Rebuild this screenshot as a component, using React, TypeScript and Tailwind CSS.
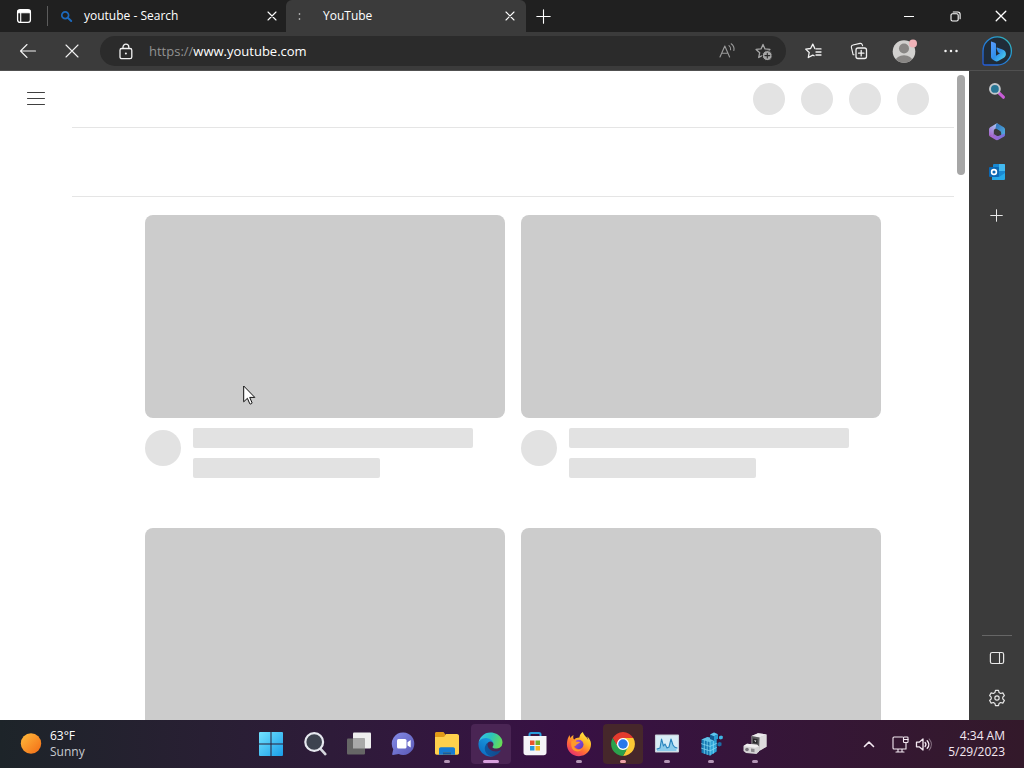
import type { ReactNode } from 'react';

type IconProps = { size?: number; box?: number; className?: string; children: ReactNode };

function Icon({ size = 20, box = 20, className = '', children }: IconProps) {
  return (
    <svg
      width={size}
      height={size}
      viewBox={`0 0 ${box} ${box}`}
      fill="none"
      stroke="currentColor"
      strokeWidth="1.1"
      strokeLinecap="round"
      strokeLinejoin="round"
      className={`shrink-0 ${className}`}
      aria-hidden="true"
    >
      {children}
    </svg>
  );
}

function CloseGlyph({ size = 10 }: { size?: number }) {
  return (
    <Icon size={size} box={10} className="text-white">
      <path d="M1 1l8 8M9 1L1 9" />
    </Icon>
  );
}

function TabStrip() {
  return (
    <header className="flex h-8 shrink-0 items-stretch bg-[#202020] text-white">
      <button aria-label="Tab actions" className="flex w-[47px] items-center justify-center">
        <Icon size={16} box={16}>
          <rect x="1.6" y="1.6" width="12.8" height="12.8" rx="2.4" strokeWidth="1.3" />
          <path d="M2 2.5h12v2.2H2z" fill="currentColor" />
          <path d="M4.7 4v10" />
        </Icon>
      </button>
      <div className="my-1.5 w-px bg-[#5c5c5c]" />
      <div className="flex w-[238px] items-center pl-3">
        <Icon size={13} box={13} className="text-[#1c69bd]">
          <circle cx="5.2" cy="5.2" r="3.4" strokeWidth="1.7" />
          <path d="M7.8 7.8l3.4 3.2" strokeWidth="2" />
        </Icon>
        <a href="#search" className="ml-[11px] flex-1 text-[12px] leading-4">youtube - Search</a>
        <button aria-label="Close youtube - Search" className="flex size-7 items-center justify-center">
          <CloseGlyph />
        </button>
      </div>
      <div className="flex w-60 items-center rounded-t-md bg-[#3b3b3b] pl-2.5">
        <Icon size={7} box={7} className="text-[#b0b0b0]">
          <path d="M3.5 .9v.2M3.5 5.9v.2" strokeWidth="1.7" />
        </Icon>
        <a href="#youtube" className="ml-5 flex-1 text-[12px] leading-4">YouTube</a>
        <button aria-label="Close YouTube" className="mr-0.5 flex size-7 items-center justify-center">
          <CloseGlyph />
        </button>
      </div>
      <button aria-label="New tab" className="flex w-[34px] items-center justify-center">
        <Icon size={15} box={15}><path d="M7.5 .8v13.4M.8 7.5h13.4" /></Icon>
      </button>
      <div className="ml-auto flex">
        <button aria-label="Minimize" className="flex w-[46px] items-center justify-center">
          <Icon size={10} box={10}><path d="M0 5.5h10" /></Icon>
        </button>
        <button aria-label="Restore" className="flex w-[46px] items-center justify-center">
          <Icon size={11} box={11}>
            <rect x="1" y="2.8" width="7.2" height="7.2" rx="1.5" />
            <path d="M3.2 1h4.6a2.3 2.3 0 0 1 2.3 2.3v4.5" />
          </Icon>
        </button>
        <button aria-label="Close window" className="flex w-[46px] items-center justify-center">
          <CloseGlyph size={12} />
        </button>
      </div>
    </header>
  );
}

const STAR = 'M9 2.4l2 4.5 4.9.5-3.6 3.3 1 4.8L9 13.1l-4.3 2.4 1-4.8L2.1 7.4 7 6.9z';

function BingBadge() {
  return (
    <Icon size={32} box={32}>
      <defs>
        <linearGradient id="bing-ring" x1="0" y1="1" x2="1" y2="0">
          <stop offset="0" stopColor="#2457d6" />
          <stop offset=".6" stopColor="#2490d8" />
          <stop offset="1" stopColor="#36bfb0" />
        </linearGradient>
        <linearGradient id="bing-b" x1="0" y1="0" x2="1" y2="1">
          <stop offset="0" stopColor="#5b9cff" />
          <stop offset=".5" stopColor="#2f8fe9" />
          <stop offset="1" stopColor="#52dcec" />
        </linearGradient>
      </defs>
      <path
        d="M16.3 1.8a14 14 0 1 1 0 28.2H3.8c-1.2 0-1.8-.7-1.8-1.8V16A14.2 14.2 0 0 1 16.3 1.800z"
        fill="#202c38"
        stroke="url(#bing-ring)"
        strokeWidth="1.3"
      />
      <path
        d="M10.200 6.400l3.500 1.300c.9.3 1.300.9 1.300 1.800v11.300l4-2.500-2-1-1.400-3.700c-.3-.8.2-1.200 1-.9l4.900 1.900c2.300.9 3.400 2.400 3.400 4.400 0 1.700-.8 3-2.400 3.900l-4.900 2.900c-1.600.9-3.100.8-4.500-.2l-1.400-1c-1.100-.8-1.700-1.700-1.700-2.900V6.800c0-.3.1-.5.200-.4z"
        fill="url(#bing-b)"
        stroke="none"
      />
    </Icon>
  );
}

function Toolbar() {
  return (
    <div className="flex h-[39px] shrink-0 items-center border-b border-[#505050] bg-[#3b3b3b] px-1 text-[#f2f2f2]">
      <button aria-label="Back" className="ml-0.5 flex w-11 justify-center">
        <Icon size={18} box={18}><path d="M8 2.5L1.5 9 8 15.5M1.5 9h15" /></Icon>
      </button>
      <button aria-label="Stop loading" className="flex w-11 justify-center">
        <Icon size={14} box={14}><path d="M1 1l12 12M13 1L1 13" /></Icon>
      </button>
      <form className="mr-1 ml-1.5 flex h-[30px] min-w-0 flex-1 items-center rounded-full bg-[#2b2b2b]">
        <button type="button" aria-label="Site information" className="mr-3.5 ml-[18px] flex">
          <Icon size={17} box={17}>
            <rect x="2" y="5.5" width="11.800" height="10.200" rx="1.800" strokeWidth="1.300" />
            <path d="M5 5.300V4a2.900 2.900 0 0 1 5.800 0v1.300" strokeWidth="1.300" />
            <circle cx="7.900" cy="10.500" r="1" fill="currentColor" stroke="none" />
          </Icon>
        </button>
        <label htmlFor="address" className="text-[13px] leading-5 text-[#929292]">https://</label>
        <input
          id="address"
          defaultValue="www.youtube.com"
          className="min-w-0 flex-1 bg-transparent text-[13px] leading-5 text-white outline-none"
        />
        <button type="button" aria-label="Read aloud" className="flex w-9 justify-center text-[#9b9b9b]">
          <Icon size={18} box={18}>
            <path d="M2 15L6.800 4l4.800 11M3.600 11.300H10" />
            <path d="M11 3.600c1.400 1.100 1.900 2.500 1.600 4.200M13.200 1.800c2.400 1.700 3.200 4 2.700 6.700" />
          </Icon>
        </button>
        <button type="button" aria-label="Add to favorites" className="mr-[5px] flex w-9 justify-center text-[#a5a5a5]">
          <Icon size={19} box={19}>
            <path d={STAR} strokeWidth="1.300" />
            <circle cx="13.300" cy="13.600" r="5" fill="#a5a5a5" stroke="#2b2b2b" strokeWidth="1" />
            <path d="M13.300 11.200V16M10.900 13.600h4.800" stroke="#2b2b2b" />
          </Icon>
        </button>
      </form>
      <button aria-label="Favorites" className="flex w-[46px] justify-center">
        <Icon size={18} box={18}>
          <path d="M12 6.900H17M12 10H17M12 13H17" strokeWidth="1.300" />
          <path d="M10.800 6.600L8.800 2.100 6.600 6.500l-4.900.6 3.500 3.400-.9 5 4.500-2.400 1.300.7" strokeWidth="1.300" />
        </Icon>
      </button>
      <button aria-label="Collections" className="flex w-[46px] justify-center">
        <Icon size={18} box={18}>
          <rect x="6" y="6" width="10.500" height="10.500" rx="2" strokeWidth="1.300" />
          <path d="M4 12.800l-.9-.2-1.700-7.200A2 2 0 0 1 3 3l7.100-1.600a2 2 0 0 1 2.200 1.400l.3 1" />
          <path d="M11.200 8.500v5.400M8.500 11.200h5.400" strokeWidth="1.300" />
        </Icon>
      </button>
      <button aria-label="Profile" className="flex w-[46px] justify-center">
        <Icon size={26} box={26} className="text-transparent">
          <defs><clipPath id="avatar"><circle cx="12" cy="13.500" r="11.300" /></clipPath></defs>
          <g clipPath="url(#avatar)">
            <rect width="26" height="26" fill="#d1d0ce" />
            <circle cx="12" cy="10.500" r="5" fill="#888684" />
            <ellipse cx="12" cy="23" rx="8.500" ry="5.700" fill="#888684" />
          </g>
          <circle cx="21" cy="5.500" r="4" fill="#efb2b7" />
        </Icon>
      </button>
      <button aria-label="Settings and more" className="flex w-[46px] justify-center">
        <Icon size={16} box={16}>
          <path d="M2.500 8h.01M8 8h.01M13.500 8h.01" strokeWidth="2.500" />
        </Icon>
      </button>
      <button aria-label="Bing" className="flex w-[46px] justify-center"><BingBadge /></button>
    </div>
  );
}

function VideoPlaceholder() {
  return (
    <article>
      <div className="h-[203px] rounded-lg bg-[#cccccc]" />
      <div className="mt-2.5 flex h-[100px] items-start gap-3">
        <div className="mt-0.5 size-9 shrink-0 rounded-full bg-[#e2e2e2]" />
        <div className="flex flex-1 flex-col gap-2.5">
          <div className="h-5 w-[280px] rounded-xs bg-[#e2e2e2]" />
          <div className="h-5 w-[187px] rounded-xs bg-[#e2e2e2]" />
        </div>
      </div>
    </article>
  );
}

function Page() {
  return (
    <main className="relative flex min-w-0 flex-1 overflow-hidden bg-white">
      <div className="w-[72px] shrink-0 pt-[19px] pl-[26px]">
        <button aria-label="Guide" className="flex text-[#404040]">
          <Icon size={20} box={20}><path d="M1.500 2.500h17M1.500 8.500h17M1.500 14.500h17" strokeWidth="1" /></Icon>
        </button>
      </div>
      <div className="min-w-0 flex-1">
        <div className="flex h-[57px] items-center justify-end gap-4 border-b border-[#e5e5e5] pr-[25px]">
          <div className="size-8 rounded-full bg-[#e3e3e3]" />
          <div className="size-8 rounded-full bg-[#e3e3e3]" />
          <div className="size-8 rounded-full bg-[#e3e3e3]" />
          <div className="size-8 rounded-full bg-[#e3e3e3]" />
        </div>
        <div className="h-[69px] border-b border-[#e5e5e5]" />
        <section aria-label="Videos" className="mx-auto mt-[18px] grid max-w-[736px] grid-cols-2 gap-x-4">
          <VideoPlaceholder />
          <VideoPlaceholder />
          <VideoPlaceholder />
          <VideoPlaceholder />
        </section>
      </div>
      <div className="w-[15px] shrink-0 pt-1 pl-[3px]">
        <div className="h-[100px] w-2 rounded-full bg-[#a6a6a6]" />
      </div>
      <svg className="absolute top-[314px] left-[243px]" width="14" height="21" viewBox="0 0 14 21" aria-hidden="true">
        <path
          d="M.7 1v15.800l3.700-3.500 2.400 5.500c.3.6 2.500-.3 2.300-.9l-2.400-5.500h5.100z"
          fill="#fff"
          stroke="#111"
          strokeWidth="1"
          strokeLinejoin="round"
        />
      </svg>
    </main>
  );
}

function SideBar() {
  return (
    <aside className="flex w-[55px] shrink-0 flex-col bg-[#3b3b3b] text-[#e8e8e8]">
      <button aria-label="Search" className="flex h-10 items-center justify-center">
        <Icon size={18} box={18}>
          <path d="M11.200 11.200l4.200 4" stroke="#c75cd6" strokeWidth="3.200" />
          <circle cx="6.900" cy="6.900" r="4.900" fill="#287695" stroke="#c4c7cb" strokeWidth="2" />
        </Icon>
      </button>
      <button aria-label="Microsoft 365" className="flex h-10 items-center justify-center pt-0.5">
        <Icon size={18} box={18} className="text-transparent">
          <defs>
            <linearGradient id="m-left" x1=".6" y1="0" x2="0" y2="1">
              <stop offset="0" stopColor="#a5c3f2" /><stop offset="1" stopColor="#a65cc9" />
            </linearGradient>
            <linearGradient id="m-right" x1="0" y1="0" x2="1" y2="1">
              <stop offset="0" stopColor="#2f6fb8" /><stop offset="1" stopColor="#55b5e4" />
            </linearGradient>
            <linearGradient id="m-bottom" x1="0" y1="0" x2="1" y2="0">
              <stop offset="0" stopColor="#b865cf" /><stop offset="1" stopColor="#6f72dc" />
            </linearGradient>
          </defs>
          <path d="M8.500.600L2.200 4.200C1.400 4.700 1 5.400 1 6.300v5.900l4.800 1.300V7.800c0-.9.4-1.500 1.100-1.900l3.500-2V1.200C9.900.500 9.200.300 8.500.600z" fill="url(#m-left)" />
          <path d="M8.500.600l-1 4.600 4.500 2.700c.8.500 1.200 1.100 1.200 2v4.300l3-1.700c.6-.5.8-1.100.8-1.900V6.300c0-.9-.4-1.600-1.200-2.100l-5-3C10 .700 9.200.400 8.500.600z" fill="url(#m-right)" />
          <path d="M1 12.200c.1.600.5 1 1.100 1.400l5 3c1.300.7 2.500.7 3.800 0l4.900-2.900c.8-.5 1.200-1.100 1.200-2l-.3-1.100-5.800 2.200c-.8.400-1.400.4-2.200 0l-2.900-1.700v1.400z" fill="url(#m-bottom)" />
          <path d="M9 6.500l2.500 1.400v2.800L9 12.100l-2.500-1.400V7.900z" fill="#3b3b3b" />
        </Icon>
      </button>
      <button aria-label="Outlook" className="flex h-10 items-center justify-center pt-0.5">
        <Icon size={18} box={18} className="text-transparent">
          <rect x="5" y="1" width="12" height="14" rx="1" fill="#1989d2" />
          <path d="M11 1h5a1 1 0 0 1 1 1v6h-6z" fill="#43baf0" />
          <path d="M4 9l7 5 6-4v6a1 1 0 0 1-1 1H4z" fill="#26a9e8" />
          <rect x="1" y="4" width="10" height="10" rx="1" fill="#0b68b4" />
          <circle cx="6" cy="9" r="2.400" stroke="#fff" strokeWidth="1.600" />
        </Icon>
      </button>
      <button aria-label="Customize" className="flex h-12 items-center justify-center">
        <Icon size={13} box={13}><path d="M6.500 .7v11.600M.7 6.500h11.600" strokeWidth="1" /></Icon>
      </button>
      <div className="mx-auto mt-auto mb-0.5 h-px w-[30px] bg-[#666666]" />
      <button aria-label="Toggle sidebar" className="flex h-10 items-center justify-center">
        <Icon size={16} box={16}>
          <rect x="1.400" y="2.500" width="13.200" height="11" rx="1.800" strokeWidth="1.200" />
          <path d="M10.500 2.500v11" />
        </Icon>
      </button>
      <button aria-label="Settings" className="mb-0.5 flex h-10 items-center justify-center">
        <Icon size={18} box={20}>
          <path d="M8.300 1.500h3.400l.6 2.500 1.700 1 2.500-.7 1.700 2.900-1.800 1.800v2l1.800 1.800-1.700 2.900-2.500-.7-1.700 1-.6 2.500H8.300L7.700 16 6 15l-2.500.7-1.700-2.900L3.600 11V9L1.800 7.200l1.700-2.900L6 5l1.700-1z" strokeWidth="1.300" />
          <circle cx="10" cy="10" r="2.400" strokeWidth="1.300" />
        </Icon>
      </button>
    </aside>
  );
}

function StartIcon() {
  return (
    <Icon size={26} box={26} className="text-transparent">
      <defs>
        <linearGradient id="win" x1="0" y1="0" x2="1" y2="1">
          <stop offset="0" stopColor="#73e3ff" /><stop offset="1" stopColor="#199de8" />
        </linearGradient>
      </defs>
      <path d="M2 1h10.500v11.500H1V2a1 1 0 0 1 1-1zM13.500 1H24a1 1 0 0 1 1 1v10.500H13.500zM1 13.500h11.500V25H2a1 1 0 0 1-1-1zM13.500 13.500H25V24a1 1 0 0 1-1 1H13.500z" fill="url(#win)" />
    </Icon>
  );
}

function SearchIcon() {
  return (
    <Icon size={26} box={26}>
      <path d="M18.500 17.800l4.800 5.300" stroke="#d5d7de" strokeWidth="2.600" />
      <circle cx="12.200" cy="11" r="8.900" fill="#3d434f" stroke="#e6e8ef" strokeWidth="2.200" />
    </Icon>
  );
}

function TaskViewIcon() {
  return (
    <Icon size={26} box={26} className="text-transparent">
      <rect x="7" y="1.500" width="18" height="16" rx="1" fill="#eeeeee" />
      <rect x="1" y="7.500" width="18" height="16" rx="1" fill="#666666" />
      <path d="M7 7.500h12v10H7z" fill="#a9a9a9" />
    </Icon>
  );
}

function ChatIcon() {
  return (
    <Icon size={26} box={26} className="text-transparent">
      <defs>
        <linearGradient id="chat" x1="0" y1="0" x2="1" y2="1">
          <stop offset="0" stopColor="#858be6" /><stop offset="1" stopColor="#5a59b7" />
        </linearGradient>
      </defs>
      <path d="M13.500 1.500a11.200 11.200 0 1 1-4.800 21.500L3 23.900c-.6.100-1-.4-.8-1l1.100-4.700A11.200 11.200 0 0 1 13.500 1.500z" fill="url(#chat)" />
      <rect x="7" y="8" width="9.500" height="9.500" rx="1.500" fill="#fff" />
      <path d="M17.500 11.200L20.700 9v7.600l-3.200-2.200z" fill="#fff" />
    </Icon>
  );
}

function FolderIcon() {
  return (
    <Icon size={26} box={26} className="text-transparent">
      <path d="M1 2.500C1 1.700 1.600 1 2.500 1h7l2.300 3H23c1 0 2 .8 2 2v3H1z" fill="#e29a17" />
      <path d="M10.500 5.500L12 3h11c1 0 2 .7 2 2v17c0 1-.7 1.700-1.700 1.700H2.700c-1 0-1.700-.7-1.700-1.700V6h8.300z" fill="#ffd04c" />
      <path d="M5 23.700V18c0-1 .8-1.800 1.800-1.800h12.400c1 0 1.800.8 1.800 1.800v5.700h-4v-2.500H9v2.500z" fill="#167bd3" />
      <path d="M9 21.200h8v2.500H9z" fill="#0f5ca6" />
    </Icon>
  );
}

function EdgeIcon() {
  return (
    <Icon size={25} box={266} className="text-transparent">
      <defs>
        <linearGradient id="edge-a" x1="0" y1="0" x2="1" y2="0">
          <stop offset="0" stopColor="#0c59a4" /><stop offset="1" stopColor="#114a8b" />
        </linearGradient>
        <linearGradient id="edge-b" x1=".8" y1="0" x2=".3" y2="1">
          <stop offset="0" stopColor="#1b9de2" /><stop offset="1" stopColor="#0b6bc0" />
        </linearGradient>
        <linearGradient id="edge-c" x1="0" y1=".2" x2="1" y2=".5">
          <stop offset="0" stopColor="#35c1f1" /><stop offset=".5" stopColor="#2cc4b9" /><stop offset="1" stopColor="#66dc57" />
        </linearGradient>
      </defs>
      <path d="M235.700 195.500a94 94 0 0 1-10.500 4.700 102 102 0 0 1-36 6.400c-47.300 0-88.500-32.500-88.500-74.300A31.500 31.500 0 0 1 117.100 105c-42.800 1.800-53.800 46.400-53.800 72.500 0 73.900 68.100 81.400 82.800 81.400 7.900 0 19.800-2.300 27-4.600l1.300-.4a128.300 128.300 0 0 0 66.600-52.800 4 4 0 0 0-5.300-5.600z" fill="url(#edge-a)" />
      <path d="M110.300 246.300A79.200 79.200 0 0 1 87.600 225a80.700 80.700 0 0 1 29.500-120c3.100-1.500 8.500-4.100 15.500-4a32.400 32.400 0 0 1 25.700 13 31.900 31.900 0 0 1 6.400 18.700c0-.2 24.500-79.600-80-79.600-43.900 0-80 41.700-80 78.200a130 130 0 0 0 12.100 56 128 128 0 0 0 156.400 67.100 75.600 75.600 0 0 1-62.800-8z" fill="url(#edge-b)" />
      <path d="M156.900 153.800c-.8 1-3.300 2.500-3.300 5.700 0 2.600 1.700 5.100 4.700 7.200 14.400 10 41.500 8.700 41.600 8.700a59.600 59.600 0 0 0 30.300-8.400 61.400 61.400 0 0 0 30.400-52.900c.3-22.400-8-37.300-11.300-43.900C228.100 28.800 182.400 4.900 132.600 4.900A128 128 0 0 0 4.600 131c.5-36.500 36.800-66 80-66 3.500 0 23.500.3 42 10 16.300 8.600 24.900 19 30.900 29.300 6.200 10.700 7.300 24.100 7.300 29.500s-2.800 13.300-7.900 20z" fill="url(#edge-c)" />
    </Icon>
  );
}

function StoreIcon() {
  return (
    <Icon size={26} box={26} className="text-transparent">
      <path d="M7.500 6V3.500C7.500 2.600 8 2 9 2h8c1 0 1.500.6 1.500 1.500V6" stroke="#289cdb" strokeWidth="2" />
      <path d="M1.500 5h23v16.500c0 1.700-1.200 2.800-2.800 2.800H4.300c-1.600 0-2.800-1.100-2.800-2.800z" fill="#f5f4f8" />
      <path d="M8 9.500h4.500V14H8z" fill="#e9532b" />
      <path d="M13.500 9.500H18V14h-4.500z" fill="#74ae2a" />
      <path d="M8 15h4.500v4.500H8z" fill="#2798d9" />
      <path d="M13.500 15H18v4.500h-4.500z" fill="#f4b51b" />
    </Icon>
  );
}

function FirefoxIcon() {
  return (
    <Icon size={26} box={26} className="text-transparent">
      <defs>
        <linearGradient id="fox" x1=".85" y1="0" x2=".2" y2="1">
          <stop offset="0" stopColor="#fff04a" /><stop offset=".35" stopColor="#ffb928" /><stop offset=".65" stopColor="#ff6b36" /><stop offset="1" stopColor="#e32878" />
        </linearGradient>
        <linearGradient id="globe" x1="0" y1="0" x2="1" y2="1">
          <stop offset="0" stopColor="#a954e7" /><stop offset="1" stopColor="#5438b5" />
        </linearGradient>
      </defs>
      <path d="M23.600 8.500c-.6-1.300-1.600-2.500-2.500-3 .7 1.300 1 2.500 1.100 3.400-1.300-3.100-4.500-4.300-5.300-7.900-2.600 1.500-3.500 4.300-3.500 5.600-2.200.1-3.800.8-5.100 1.800l-.7-.4c-.5-1.500-.4-2.900-.1-4C5.800 4.800 4.900 6 4.300 7c-.5-.7-.5-2.400-.4-3C1.900 5.800.9 10 .9 13.300.9 20 6.200 25.200 13 25.200c6.900 0 12-5.300 12-12.100 0-1.700-.6-3.400-1.400-4.600z" fill="url(#fox)" />
      <circle cx="12.800" cy="13.500" r="4.700" fill="url(#globe)" />
      <path d="M5.200 10.500c2-1.300 4-.9 5.300.2 1.300-.1 2.800.1 3.500.4-.2 1.400-2.800 1.900-3.600 2.700-.5 1.300-1.600 1.400-2.600 1.500 1.100 3.400 5.200 4.500 8.200 2.400-2.100 4.700-10.800 3.300-10.800-4.200z" fill="#ff9a2b" />
    </Icon>
  );
}

function ChromeIcon() {
  return (
    <Icon size={26} box={48} className="text-transparent">
      <circle cx="24" cy="24" r="14" fill="#fff" />
      <path d="M4.950 13A22 22 0 0 1 43.050 13H24a11 11 0 0 0-9.530 16.500z" fill="#e33b2e" />
      <path d="M43.050 13A22 22 0 0 1 24 46l9.530-16.500A11 11 0 0 0 24 13z" fill="#fcc934" />
      <path d="M24 46A22 22 0 0 1 4.950 13l9.520 16.500a11 11 0 0 0 19.060 0z" fill="#2ba24c" />
      <circle cx="24" cy="24" r="8.800" fill="#2878ea" />
    </Icon>
  );
}

function MonitorIcon() {
  return (
    <Icon size={26} box={26} className="text-transparent">
      <rect x="1.500" y="4" width="23" height="17" rx=".5" fill="#d8edf7" stroke="#c6cdd5" />
      <path d="M3 20v-2l3-1 1.500-9 2 7 1.500-2 2 4 2-1 2-8 2 6 1.500 2 2 1v3z" fill="#8bcbea" />
      <path d="M3 18l3-1 1.500-9 2 7 1.500-2 2 4 2-1 2-8 2 6 1.500 2 2.500 1" stroke="#2884bd" strokeWidth="1.100" />
    </Icon>
  );
}

function RegistryIcon() {
  return (
    <Icon size={26} box={26} className="text-transparent">
      <path d="M3.500 8.500l6-2.500 9 2.500v12L12 24.500l-8.500-2.800z" fill="#1478b2" />
      <path d="M3.500 8.500l6-2.500 9 2.500L12 11.200z" fill="#62c4e8" />
      <path d="M12 11.200l6.500-2.700v12L12 24.500z" fill="#2ea5d8" />
      <path d="M3.500 12.700l8.500 2.700 6.500-3M3.500 17.200l8.500 2.700 6.500-3.400M6.300 9.500v13M9.200 10.400v13.200M12 11.200v13M15.300 10v12.300" stroke="#8ce0f8" strokeWidth=".7" />
      <path d="M12 3.500l4-2 4 1.700v4.500l-4 2-4-1.700z" fill="#125a91" />
      <path d="M12 3.500l4-2 4 1.700-4 2z" fill="#5fc6ed" />
      <path d="M16 5.200l4-2v4.500l-4 2z" fill="#2c9bd1" />
      <path d="M21 5.500l2-1 1.800.8v2.200l-2 1-1.800-.8z" fill="#3fb5e4" />
      <path d="M19.500 12l2.200-1 1.800.8v2.700l-2.200 1-1.800-.8z" fill="#1a6fa7" />
    </Icon>
  );
}

function DeviceIcon() {
  return (
    <Icon size={26} box={26} className="text-transparent">
      <path d="M9.500 5L16 2.200l8.500 1.300v12.300L17 20l-7.500-1.500z" fill="#c2c0c3" />
      <path d="M9.500 5L16 2.200l8.500 1.300L17.500 6.500z" fill="#eceaed" />
      <path d="M17.500 6.500l7-3v12.300l-7.500 4.200z" fill="#dddbdd" />
      <path d="M9.500 5l8 1.500L17 20l-7.500-1.500z" fill="#5b595d" />
      <path d="M11 7.500l4.500.8v4.500L11 12z" fill="#27262a" />
      <path d="M12 9.200l2.300.4-.6 1.700z" fill="#e7e5e7" />
      <path d="M1.500 15l3.500-2.300 10 1 2 1.800v5L14.500 23 4 22l-2.500-2z" fill="#d5d3d5" />
      <path d="M1.500 15L5 12.700l10 1 2 1.800-4 1.200z" fill="#f0eef0" />
      <circle cx="5" cy="18.500" r="1.800" fill="#77747a" />
      <path d="M9 17.600l3.500.3v3.300L9 20.800z" fill="#8a878b" />
    </Icon>
  );
}

type Task = { label: string; icon: ReactNode; state?: 'open' | 'active' | 'alert' };

const tasks: Task[] = [
  { label: 'Start', icon: <StartIcon /> },
  { label: 'Search', icon: <SearchIcon /> },
  { label: 'Task view', icon: <TaskViewIcon /> },
  { label: 'Chat', icon: <ChatIcon /> },
  { label: 'File Explorer', icon: <FolderIcon />, state: 'open' },
  { label: 'Microsoft Edge', icon: <EdgeIcon />, state: 'active' },
  { label: 'Microsoft Store', icon: <StoreIcon /> },
  { label: 'Firefox', icon: <FirefoxIcon />, state: 'open' },
  { label: 'Google Chrome', icon: <ChromeIcon />, state: 'alert' },
  { label: 'Resource Monitor', icon: <MonitorIcon />, state: 'open' },
  { label: 'Registry Editor', icon: <RegistryIcon />, state: 'open' },
  { label: 'Devices', icon: <DeviceIcon />, state: 'open' },
];

const tileStyles = { idle: '', open: '', active: 'bg-[#4a2554]', alert: 'bg-[#46272b]' };
const markStyles = {
  idle: '',
  open: 'w-1.5 bg-[#b295b5]',
  active: 'w-4 bg-[#d8a0df]',
  alert: 'w-1.5 bg-[#eda1a6]',
};

function TaskButton({ label, icon, state }: Task) {
  const key = state ?? 'idle';
  return (
    <div className="px-0.5 py-1">
      <button aria-label={label} className={`relative flex size-10 items-center justify-center rounded ${tileStyles[key]}`}>
        {icon}
        {state && <span className={`absolute inset-x-0 bottom-px mx-auto h-[3px] rounded-full ${markStyles[key]}`} />}
      </button>
    </div>
  );
}

function TaskBar() {
  return (
    <footer className="grid h-12 shrink-0 grid-cols-[1fr_auto_1fr] items-center bg-linear-to-r from-[#1d2429] via-[#381044] to-[#33192a] text-white [--tw-gradient-via-position:55%]">
      <button className="flex items-center pl-5 text-left">
        <Icon size={22} box={22} className="text-transparent">
          <defs>
            <linearGradient id="sun" x1="0" y1="0" x2="1" y2="1">
              <stop offset="0" stopColor="#ffbc3c" /><stop offset="1" stopColor="#f26b16" />
            </linearGradient>
          </defs>
          <circle cx="11" cy="10.500" r="10.200" fill="url(#sun)" />
        </Icon>
        <span className="ml-2 text-[12px] leading-4">
          <span className="block">63°F</span>
          <span className="block text-[#c8cbd0]">Sunny</span>
        </span>
      </button>
      <nav aria-label="Taskbar" className="flex pl-px">
        {tasks.map((task) => <TaskButton key={task.label} {...task} />)}
      </nav>
      <div className="flex items-center justify-end pr-[19px] text-[#f4e9f2]">
        <button aria-label="Hidden icons" className="mr-4 flex">
          <Icon size={12} box={12}><path d="M1.500 8.500L6 4l4.500 4.500" strokeWidth="1.600" /></Icon>
        </button>
        <button aria-label="Network and volume" className="mr-4 flex items-center gap-1.5">
          <Icon size={18} box={18}>
            <path d="M11.500 2H3a1 1 0 0 0-1 1v10a1 1 0 0 0 1 1h12V8M5 17h8M7 14v3M11 14v3" />
            <rect x="12.500" y="2" width="4.500" height="5.500" rx=".8" />
            <path d="M12.500 4.500H17" />
          </Icon>
          <Icon size={17} box={17}>
            <path d="M1.500 6.200h2.700L8 3v11l-3.800-3.200H1.500z" strokeWidth="1.300" />
            <path d="M10.100 6.500c1 1.200 1 2.800 0 4M12.200 4.700c2.100 2.300 2.100 5.300 0 7.600" strokeWidth="1.300" />
            <path d="M14.200 3c2.800 3.300 2.800 7.700 0 11" opacity=".45" />
          </Icon>
        </button>
        <button className="text-right text-[12px] leading-4">
          <span className="block">4:34 AM</span>
          <span className="block">5/29/2023</span>
        </button>
      </div>
    </footer>
  );
}

export default function App() {
  return (
    <div className="flex h-screen flex-col overflow-hidden font-['Open_Sans','Noto_Sans',sans-serif]">
      <TabStrip />
      <Toolbar />
      <div className="flex min-h-0 flex-1">
        <Page />
        <SideBar />
      </div>
      <TaskBar />
    </div>
  );
}
